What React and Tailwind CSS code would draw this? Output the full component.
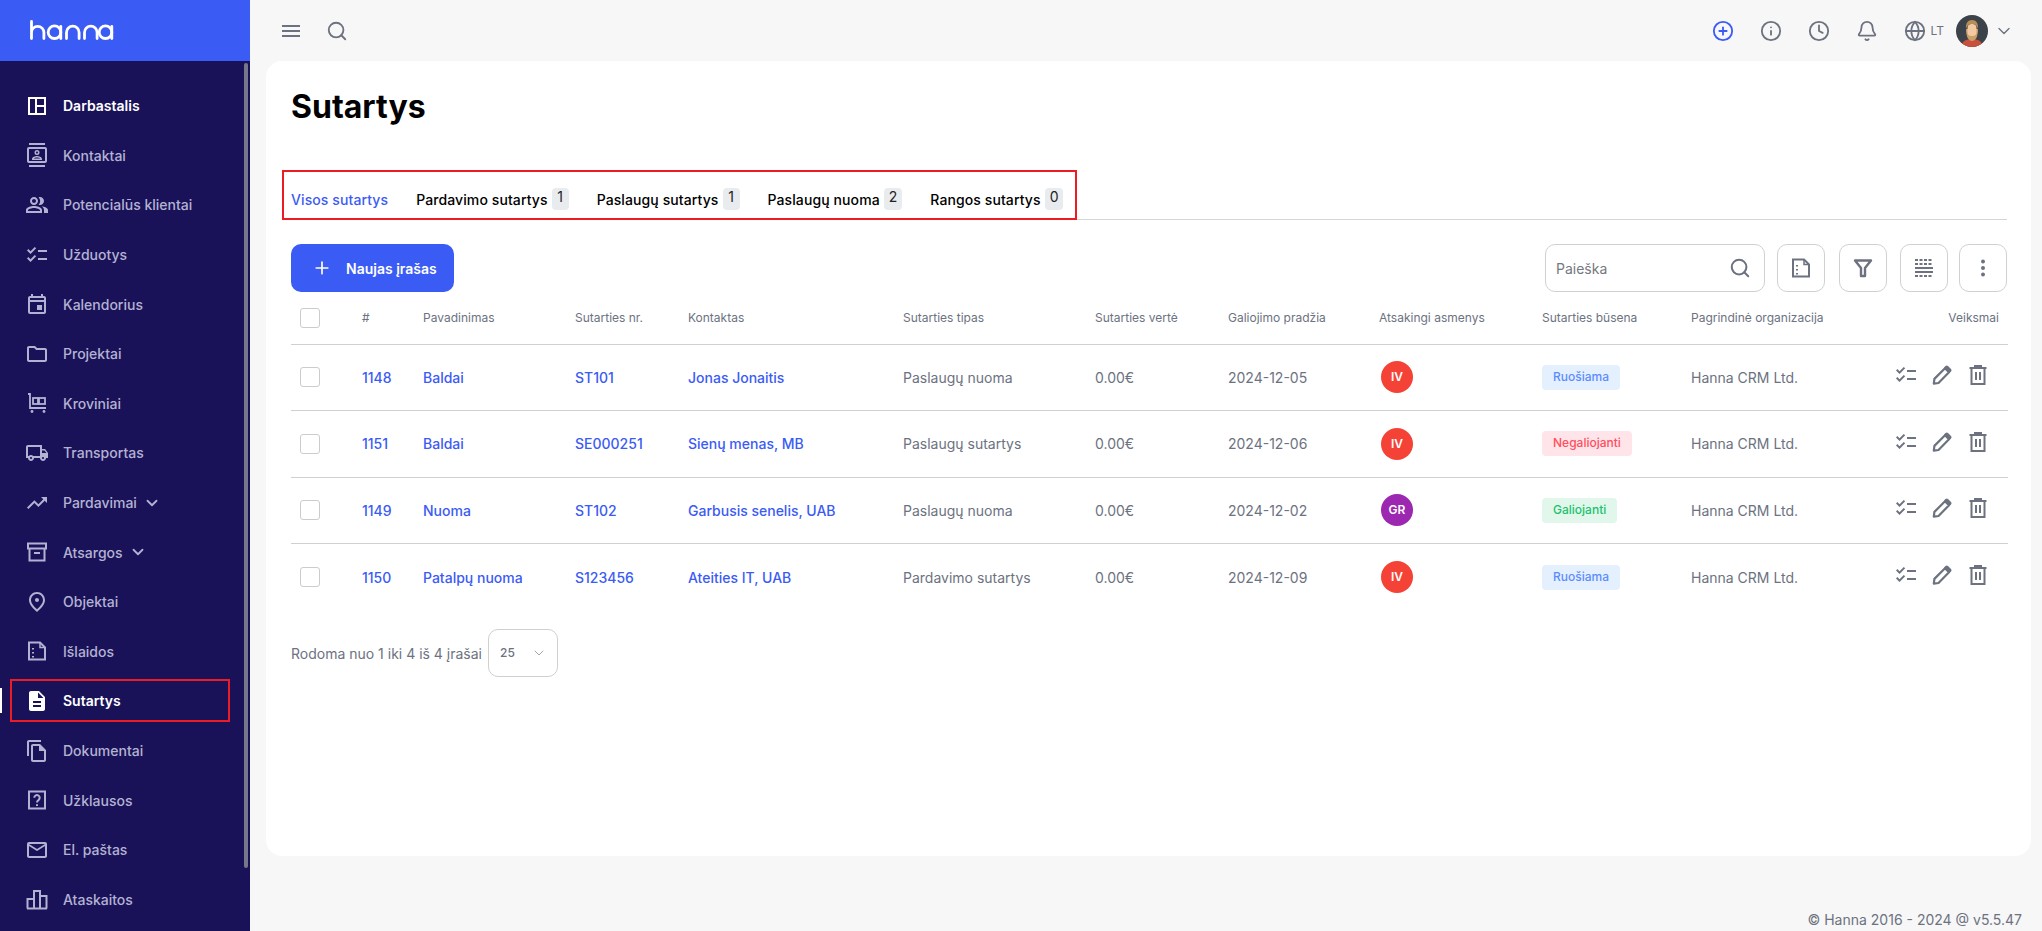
import React from 'react';
import { CirclePlus, Info, Clock, Bell, Globe, ChevronDown, Search, Plus } from 'lucide-react';
import {
  MdOutlineContacts, MdOutlinePeopleAlt, MdChecklist, MdOutlineEvent, MdOutlineFolder,
  MdOutlineLocalShipping, MdOutlineTrendingUp, MdOutlinePlace, MdDescription,
  MdOutlineFileCopy, MdOutlineEmail,
} from 'react-icons/md';

const IconDash = () => (
  <svg width="24" height="24" viewBox="0 0 24 24" fill="none" stroke="currentColor" strokeWidth="2">
    <rect x="4" y="4" width="16" height="16" /><path d="M11 4v16M11 12h9" />
  </svg>
);
const IconBox = () => (
  <svg width="24" height="24" viewBox="0 0 24 24" fill="none" stroke="currentColor" strokeWidth="2">
    <rect x="3" y="3.500" width="18" height="5" /><path d="M4.500 8.500V20.500h15V8.500M9 13h6" />
  </svg>
);
const IconCart = () => (
  <svg width="24" height="24" viewBox="0 0 24 24" fill="none" stroke="currentColor" strokeWidth="1.800">
    <path d="M3 3h2v14h16" /><rect x="8" y="7" width="5" height="6" /><rect x="14" y="7" width="6" height="6" />
    <circle cx="7" cy="20.500" r="1.400" fill="currentColor" stroke="none" /><circle cx="19" cy="20.500" r="1.400" fill="currentColor" stroke="none" />
  </svg>
);
const IconReceipt = ({ size = 24 }) => (
  <svg width={size} height={size} viewBox="0 0 24 24" fill="none" stroke="currentColor" strokeWidth="2">
    <path d="M4 3.500h11l5 5v12H4z" /><path d="M15 3.500v5h5" strokeWidth="1.500" />
    <path d="M8 9v1.600M8 13v1.600M8 17v1.600" />
  </svg>
);
const IconQuestion = () => (
  <svg width="24" height="24" viewBox="0 0 24 24" fill="none" stroke="currentColor" strokeWidth="2">
    <rect x="4" y="3.500" width="16" height="17" /><path d="M9.300 9.800a2.700 2.700 0 1 1 4.400 2.100c-1 .8-1.700 1.300-1.700 2.600" />
    <path d="M12 16.200v1.800" />
  </svg>
);
const IconBars = () => (
  <svg width="24" height="24" viewBox="0 0 24 24" fill="none" stroke="currentColor" strokeWidth="2">
    <path d="M2.500 21.500V12h6.500v9.500M9 21.500V4h6v17.500M15 21.500V9h6.500v12.500M2 21.500h20" />
  </svg>
);
const IconTrash = () => (
  <svg width="24" height="24" viewBox="0 0 24 24" fill="none" stroke="currentColor" strokeWidth="2">
    <path d="M3.500 5h17M9 5V3h6v2M5.500 5v16h13V5M10 9v8M14 9v8" />
  </svg>
);
const IconPencil = () => (
  <svg width="24" height="24" viewBox="0 0 24 24" fill="none" stroke="currentColor" strokeWidth="2.200" strokeLinejoin="round">
    <path d="M3.800 20.700l.6-4.800L15 5.300l4 4L8.500 20z" />
    <path d="M15.500 3a1.800 1.800 0 0 1 2.500 0l3 3a1.800 1.800 0 0 1 0 2.500l-1.500 1.500-5.500-5.500z" fill="currentColor" stroke="none" />
  </svg>
);
const IconColumns = () => (
  <svg width="24" height="24" viewBox="0 0 24 24" fill="none" stroke="currentColor" strokeWidth="2">
    <path d="M3 4h18M3 8h18M3 20h18" strokeDasharray="3 1.500" /><path d="M3 12h18M3 16h18" />
  </svg>
);
const IconFilter = () => (
  <svg width="24" height="24" viewBox="0 0 24 24" fill="none" stroke="currentColor" strokeWidth="2.400" strokeLinejoin="round">
    <path d="M4 4.500h16l-6 7.500v8h-4v-8z" />
  </svg>
);
const IconMenu = () => (
  <svg width="24" height="24" viewBox="0 0 24 24" fill="none" stroke="currentColor" strokeWidth="2">
    <path d="M3 7h18M3 12h18M3 17h18" />
  </svg>
);
const Logo = () => (
  <svg width="84" height="20" viewBox="0 0 84 20" fill="none" stroke="white" strokeWidth="2.800" strokeLinecap="round">
    <path d="M1.500 1.500V18.500M1.500 12.500a6.200 6.200 0 0 1 12.400 0v6" />
    <circle cx="24.500" cy="12.200" r="6.300" /><path d="M30.800 6.500v12" />
    <path d="M36.500 18.500v-6a6.300 6.300 0 0 1 12.600 0v6" />
    <path d="M54.500 18.500v-6a6.300 6.300 0 0 1 12.600 0v6" />
    <circle cx="75.500" cy="12.200" r="6.300" /><path d="M81.800 6.500v12" />
  </svg>
);
const Avatar = () => (
  <svg width="32" height="32" viewBox="0 0 32 32" className="rounded-full">
    <rect width="32" height="32" fill="#3c4249" />
    <path d="M5 32c1-6 5-8 11-8s10 2 11 8z" fill="#c9503a" />
    <path d="M10 14c0 7 2 12 6 12s6-5 6-12z" fill="#c8a06a" />
    <rect x="11.500" y="9" width="9" height="12" rx="4" fill="#f2c9a0" />
    <path d="M10 14c-.5-6 2-9 6-9s6.500 3 6 9c-1-3-2-5-6-5s-5 2-6 5z" fill="#b98e56" />
  </svg>
);

const nav = [
  { label: 'Darbastalis', Icon: IconDash, bright: true },
  { label: 'Kontaktai', Icon: MdOutlineContacts },
  { label: 'Potencialūs klientai', Icon: MdOutlinePeopleAlt },
  { label: 'Užduotys', Icon: MdChecklist },
  { label: 'Kalendorius', Icon: MdOutlineEvent },
  { label: 'Projektai', Icon: MdOutlineFolder },
  { label: 'Kroviniai', Icon: IconCart },
  { label: 'Transportas', Icon: MdOutlineLocalShipping },
  { label: 'Pardavimai', Icon: MdOutlineTrendingUp, sub: true },
  { label: 'Atsargos', Icon: IconBox, sub: true },
  { label: 'Objektai', Icon: MdOutlinePlace },
  { label: 'Išlaidos', Icon: IconReceipt },
  { label: 'Sutartys', Icon: MdDescription, bright: true, active: true },
  { label: 'Dokumentai', Icon: MdOutlineFileCopy },
  { label: 'Užklausos', Icon: IconQuestion },
  { label: 'El. paštas', Icon: MdOutlineEmail },
  { label: 'Ataskaitos', Icon: IconBars },
];

const tabs = [
  { label: 'Visos sutartys', active: true },
  { label: 'Pardavimo sutartys', count: 1 },
  { label: 'Paslaugų sutartys', count: 1 },
  { label: 'Paslaugų nuoma', count: 2 },
  { label: 'Rangos sutartys', count: 0 },
];

const rows = [
  { id: 1148, name: 'Baldai', nr: 'ST101', contact: 'Jonas Jonaitis', type: 'Paslaugų nuoma', date: '2024-12-05', who: 'IV', status: 'Ruošiama' },
  { id: 1151, name: 'Baldai', nr: 'SE000251', contact: 'Sienų menas, MB', type: 'Paslaugų sutartys', date: '2024-12-06', who: 'IV', status: 'Negaliojanti' },
  { id: 1149, name: 'Nuoma', nr: 'ST102', contact: 'Garbusis senelis, UAB', type: 'Paslaugų nuoma', date: '2024-12-02', who: 'GR', status: 'Galiojanti' },
  { id: 1150, name: 'Patalpų nuoma', nr: 'S123456', contact: 'Ateities IT, UAB', type: 'Pardavimo sutartys', date: '2024-12-09', who: 'IV', status: 'Ruošiama' },
];

const statusCls = {
  'Ruošiama': 'bg-[#e5f0ff] text-[#5b8cff]',
  'Negaliojanti': 'bg-[#ffe5e9] text-[#ff4d5e]',
  'Galiojanti': 'bg-[#e2f7ec] text-[#1cc26d]',
};

const cols = [
  ['', 'w-[71px]'], ['#', 'w-[61px]'], ['Pavadinimas', 'w-[152px]'], ['Sutarties nr.', 'w-[113px]'],
  ['Kontaktas', 'w-[215px]'], ['Sutarties tipas', 'w-[192px]'], ['Sutarties vertė', 'w-[133px]'],
  ['Galiojimo pradžia', 'w-[151px]'], ['Atsakingi asmenys', 'w-[163px]'], ['Sutarties būsena', 'w-[149px]'],
  ['Pagrindinė organizacija', 'w-[317px]'],
];

const Checkbox = () => <div className="ml-[9px] w-[20px] h-[20px] rounded-[3px] border border-[#cccccc] bg-white" />;

function Sidebar() {
  return (
    <aside className="relative w-[250px] shrink-0 h-full bg-[#1a1259] flex flex-col">
      <div className="h-[61px] shrink-0 bg-[#3b5bf5] pl-[30px] pt-[20px]"><Logo /></div>
      <nav className="pt-[20px] flex flex-col">
        {nav.map(({ label, Icon, bright, active, sub }) => (
          <div key={label} className={`relative h-[49.6px] shrink-0 flex items-center pl-[25px] ${bright ? 'text-white font-semibold' : 'text-[#b4b2d2] font-medium'}`}>
            <Icon size={24} />
            <span className="ml-[14px] text-[14px]">{label}</span>
            {sub && <ChevronDown size={18} strokeWidth={2.400} className="ml-[6px]" />}
            {active && <span className="absolute left-0 top-[12px] w-[2px] h-[25px] bg-white" />}
            {active && <span className="absolute left-[10px] top-[3px] w-[220px] h-[43px] border-2 border-[#ed1c24]" />}
          </div>
        ))}
      </nav>
      <div className="absolute right-[2px] top-[63px] w-[4px] h-[805px] rounded-full bg-[#77778a]" />
    </aside>
  );
}

function Header() {
  return (
    <header className="h-[61px] shrink-0 flex items-center pl-[29px] pr-[28px] text-[#6c727f]">
      <IconMenu />
      <Search size={22} strokeWidth={2} className="ml-[23px]" />
      <div className="ml-auto flex items-center">
        <CirclePlus size={22} className="text-[#3b5bf5]" />
        <Info size={22} className="ml-[26px]" />
        <Clock size={22} className="ml-[26px]" />
        <Bell size={22} className="ml-[26px]" />
        <Globe size={22} className="ml-[26px]" />
        <span className="ml-[5px] text-[12px]">LT</span>
        <div className="ml-[12px]"><Avatar /></div>
        <ChevronDown size={20} strokeWidth={1.600} className="ml-[6px]" />
      </div>
    </header>
  );
}

function ToolBtn({ children, className = '' }) {
  return <button className={`w-[48px] h-[48px] rounded-[10px] border border-[#d0d0d0] bg-white flex items-center justify-center text-[#6c727f] ${className}`}>{children}</button>;
}

function Contracts() {
  return (
    <div className="h-[795px] shrink-0 ml-[16px] mr-[11px] rounded-[16px] bg-white pl-[25px] pr-[24px] pt-[26px]">
      <h1 className="text-[32px] leading-[40px] font-bold text-black">Sutartys</h1>
      <div className="relative mt-[53px] h-[40px] flex gap-[28px] border-b border-[#d5d5d5]">
        {tabs.map(t => (
          <div key={t.label} className={`h-[40px] flex items-start gap-[4px] ${t.active ? 'border-b-2 border-[#3b5bf5]' : ''}`}>
            <span className={`mt-[10px] text-[14px] leading-[20px] font-medium tracking-[0.1px] ${t.active ? 'text-[#3b5bf5]' : 'text-black'}`}>{t.label}</span>
            {t.count !== undefined && <span className="mt-[8px] min-w-[17px] h-[22px] px-[5px] rounded-[4px] bg-[#e9ecef] text-[14px] leading-[18px] text-center text-[#222]">{t.count}</span>}
          </div>
        ))}
        <span className="absolute -left-[9px] -top-[10px] w-[795px] h-[50px] border-2 border-[#ed1c24]" />
      </div>
      <div className="mt-[24px] flex items-center">
        <button className="w-[163px] h-[48px] rounded-[10px] bg-[#3b5bf5] text-white text-[14px] font-semibold flex items-center pl-[21px] gap-[14px]">
          <Plus size={20} strokeWidth={2} />Naujas įrašas
        </button>
        <div className="ml-auto flex items-center gap-[12px]">
          <div className="w-[220px] h-[48px] rounded-[10px] border border-[#d0d0d0] flex items-center pl-[10px] pr-[13px] text-[#6c727f]">
            <span className="text-[14px] text-[#75797f]">Paieška</span>
            <Search size={22} strokeWidth={2.200} className="ml-auto" />
          </div>
          <ToolBtn><IconReceipt /></ToolBtn>
          <ToolBtn className="ml-[2px]"><IconFilter /></ToolBtn>
          <ToolBtn className="ml-[1px]"><IconColumns /></ToolBtn>
          <ToolBtn className="-ml-[1px]">
            <svg width="24" height="24" viewBox="0 0 24 24" fill="currentColor"><circle cx="12" cy="5.500" r="2" /><circle cx="12" cy="12" r="2" /><circle cx="12" cy="18.500" r="2" /></svg>
          </ToolBtn>
        </div>
      </div>
      <table className="w-full table-fixed border-collapse">
        <thead>
          <tr className="h-[52px] border-b border-[#d0d0d0]">
            {cols.map(([label, w], i) => (
              <th key={i} className={`${w} p-0 text-left font-normal text-[12px] text-[#6c727f] align-middle ${i === 10 ? 'relative' : ''}`}>
                {i === 0 ? <Checkbox /> : label}
                {i === 10 && <span className="absolute right-[9px] top-[17px]">Veiksmai</span>}
              </th>
            ))}
          </tr>
        </thead>
        <tbody className="text-[14px] text-[#6c727f]">
          {rows.map((r, i) => (
            <tr key={r.id} className={`h-[66.500px] ${i < 3 ? 'border-b border-[#d0d0d0]' : ''}`}>
              <td className="p-0"><Checkbox /></td>
              <td className="p-0 font-medium text-[#3b5bf5]">{r.id}</td>
              <td className="p-0 font-medium text-[#3b5bf5]">{r.name}</td>
              <td className="p-0 font-medium text-[#3b5bf5]">{r.nr}</td>
              <td className="p-0 font-medium text-[#3b5bf5]">{r.contact}</td>
              <td className="p-0">{r.type}</td>
              <td className="p-0">0.00€</td>
              <td className="p-0">{r.date}</td>
              <td className="p-0">
                <div className={`ml-[2px] w-[32px] h-[32px] rounded-full flex items-center justify-center text-white text-[12px] font-semibold ${r.who === 'GR' ? 'bg-[#9c27b0]' : 'bg-[#f44336]'}`}>{r.who}</div>
              </td>
              <td className="p-0">
                <span className={`inline-block h-[25px] px-[11px] rounded-[4px] text-[12px] leading-[24px] font-medium ${statusCls[r.status]}`}>{r.status}</span>
              </td>
              <td className="p-0">
                <div className="flex items-center">
                  <span>Hanna CRM Ltd.</span>
                  <div className="ml-auto mr-[18px] -mt-[4px] flex items-center gap-[12px]">
                    <MdChecklist size={24} /><IconPencil /><IconTrash />
                  </div>
                </div>
              </td>
            </tr>
          ))}
        </tbody>
      </table>
      <div className="mt-[19px] flex items-center text-[14px] text-[#6c727f]">
        <span>Rodoma nuo 1 iki 4 iš 4 įrašai</span>
        <div className="ml-[6px] w-[70px] h-[48px] rounded-[10px] border border-[#d0d0d0] flex items-center pl-[11px] pr-[10px] text-[12px] font-medium">
          25<ChevronDown size={16} strokeWidth={1.400} className="ml-auto text-[#9aa0a8]" />
        </div>
      </div>
    </div>
  );
}

export default function App() {
  return (
    <div className="flex w-[2042px] h-[931px] overflow-hidden bg-[#f7f7f7] font-['Inter',sans-serif]">
      <Sidebar />
      <main className="flex-1 min-w-0 flex flex-col">
        <Header />
        <Contracts />
        <footer className="mt-[54px] pr-[20px] text-right text-[14px] leading-[20px] text-[#6c727f]">© Hanna 2016 - 2024 @ v5.5.47</footer>
      </main>
    </div>
  );
}
